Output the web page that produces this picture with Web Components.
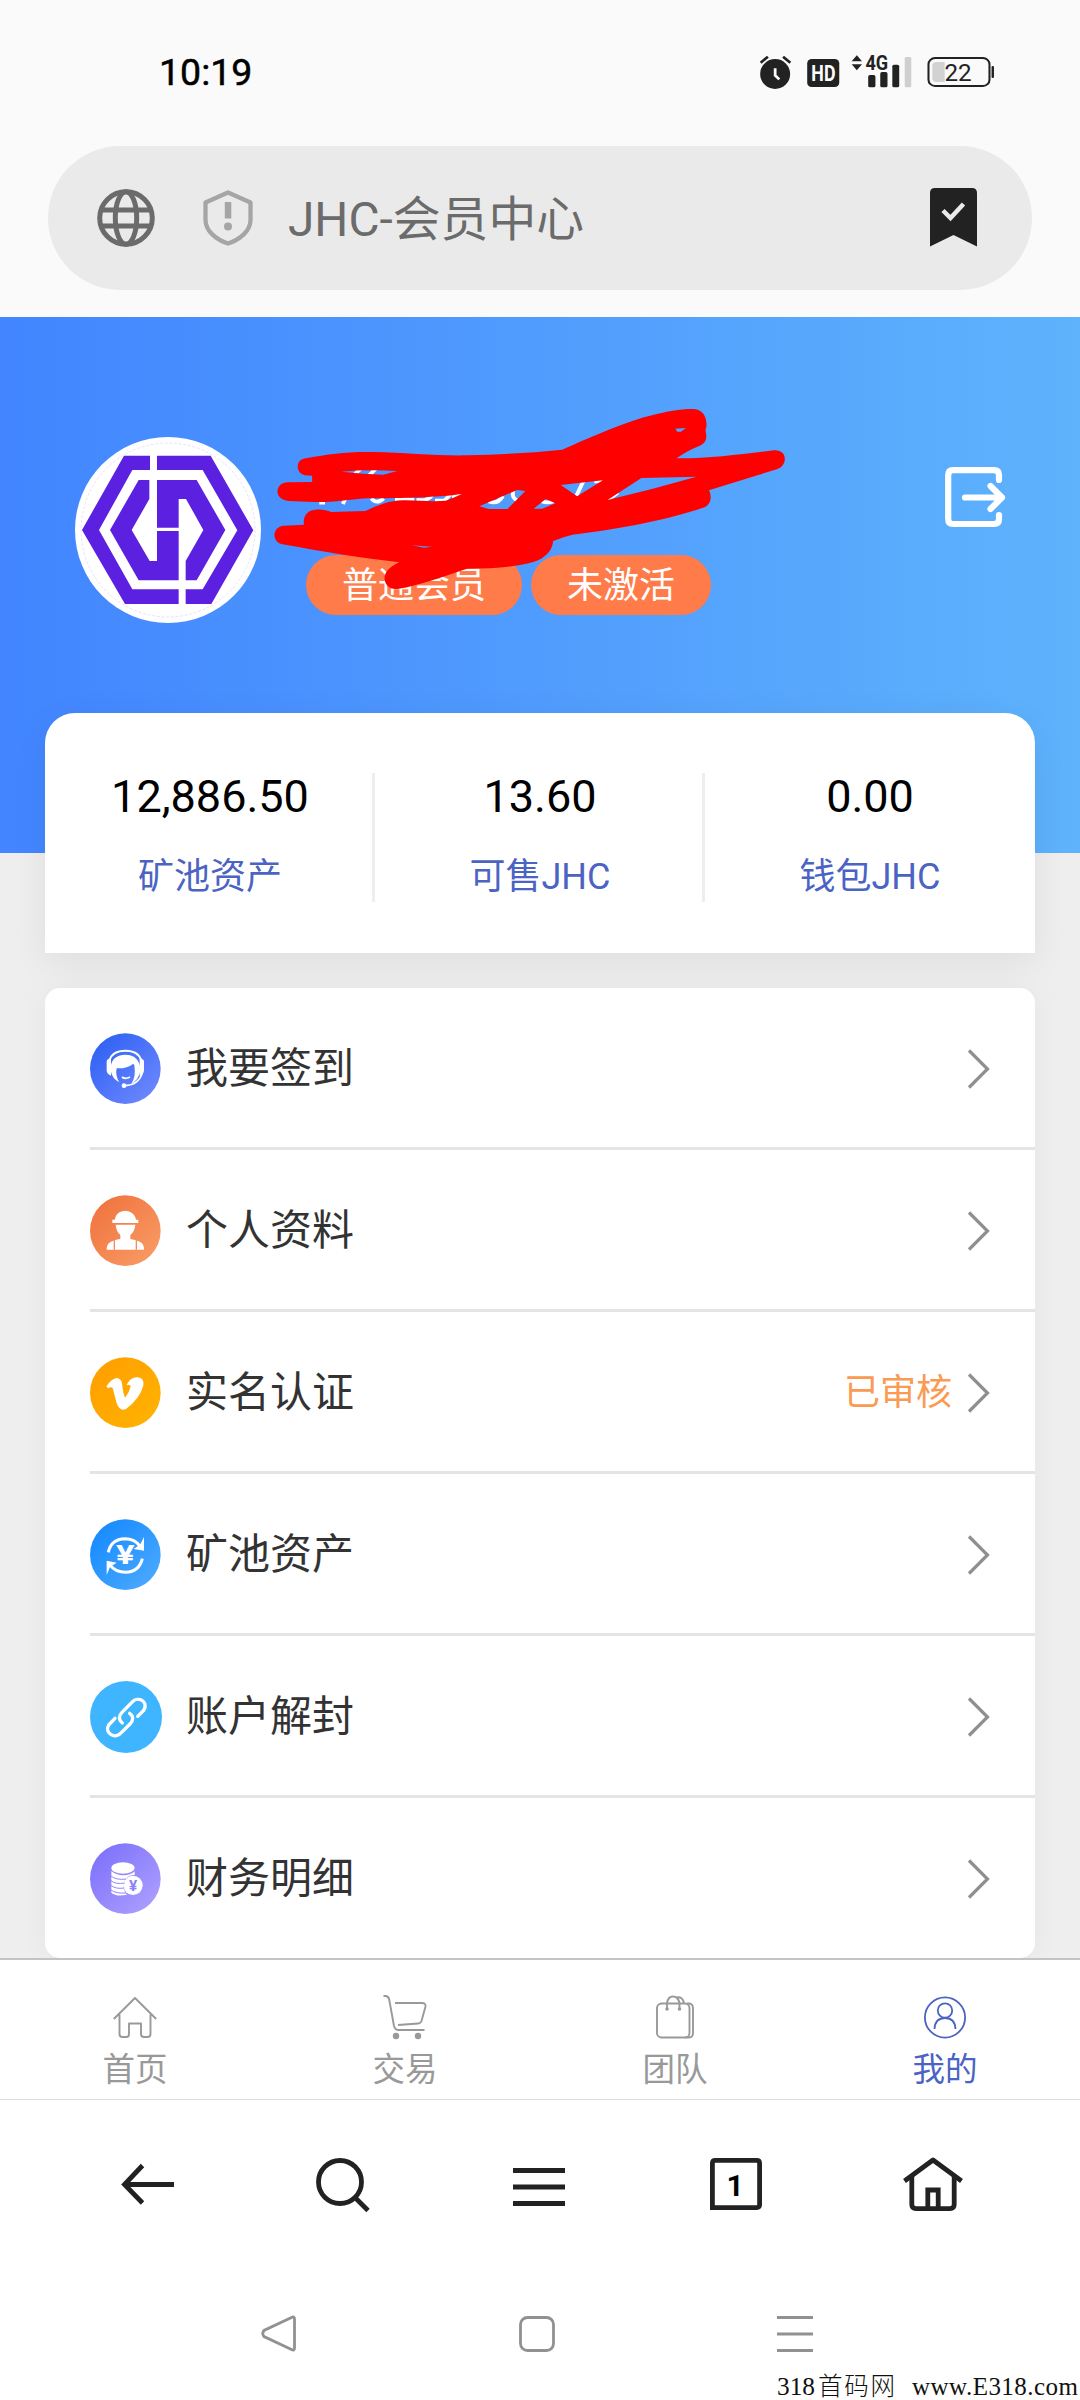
<!DOCTYPE html>
<html lang="zh-CN">
<head>
<meta charset="utf-8">
<title>JHC-会员中心</title>
<style>
html,body{margin:0;padding:0}
body{width:1080px;background:#eee;font-family:Roboto,"Noto Sans CJK SC",sans-serif;color:#333}
</style>
</head>
<body>
<member-page></member-page>
<script>
const def=(name,html,after)=>customElements.define(name,class extends HTMLElement{
  connectedCallback(){
    if(this.shadowRoot)return;
    const t=document.createElement('template');
    t.innerHTML=typeof html==='function'?html(this):html;
    this.attachShadow({mode:'open'}).append(t.content.cloneNode(true));
  }
});

const disc=(a,b,body)=>`<defs><linearGradient id="g" x1="0" y1="0" x2="1" y2="1"><stop offset=".1" stop-color="${a}"/><stop offset=".95" stop-color="${b}"/></linearGradient></defs><circle cx="106" cy="107" r="106" fill="url(#g)"/>${body}`;

/* name: [width, height, viewBox, markup] */
const ICONS={
status:[235,34,'638 165 682 102',`
 <g fill="#222"><ellipse cx="682" cy="222" rx="43.500" ry="45"/><path d="M640 188L661 170M726 188L705 170" stroke="#222" stroke-width="8"/><path d="M682 205V226L694 238" fill="none" stroke="#fafafa" stroke-width="8"/>
 <rect x="775" y="177" width="93" height="84" rx="13"/>
 <text x="822" y="242" font-family="Roboto" font-weight="700" font-size="66" fill="#fff" text-anchor="middle" textLength="70" lengthAdjust="spacingAndGlyphs">HD</text>
 <path d="M919 166L934 184H904ZM904 193H934L919 211Z"/>
 <text x="944" y="209" font-family="Roboto" font-weight="700" font-size="59" textLength="66" lengthAdjust="spacingAndGlyphs">4G</text>
 <rect x="952" y="225" width="21" height="37" rx="5"/><rect x="987" y="216" width="21" height="46" rx="5"/><rect x="1022" y="194" width="20" height="68" rx="5"/><rect x="1058" y="171" width="19" height="91" rx="4" fill="#cfcfcf"/></g>
 <rect x="1127" y="174" width="177" height="84" rx="19" fill="none" stroke="#222" stroke-width="6"/>
 <path d="M1174 186V246H1150Q1138 246 1138 234V198Q1138 186 1150 186Z" fill="#d2d2d2"/>
 <rect x="1310" y="198" width="7" height="36" rx="3" fill="#222"/>
 <text x="1213" y="243" font-family="Roboto" font-size="73" fill="#222" text-anchor="middle" textLength="79" lengthAdjust="spacingAndGlyphs">22</text>`],
globe:[58,58,'0 0 58 58',`<g fill="none" stroke="#6b6b6b" stroke-width="5"><circle cx="29" cy="29" r="26.300"/><ellipse cx="29" cy="29" rx="10.700" ry="26.300"/><path d="M5 21H53M5 37H53"/></g>`],
shield:[52,56,'0 0 52 56',`<path d="M26 2.500L48.500 12.500V30C48.500 41 38 49.500 26 53.500C14 49.500 3.500 41 3.500 30V12.500Z" fill="none" stroke="#a5a5a5" stroke-width="4.300" stroke-linejoin="round"/><rect x="22.800" y="12" width="6.500" height="16.500" fill="#a5a5a5"/><circle cx="26" cy="36.500" r="4" fill="#a5a5a5"/>`],
bookmark:[47,60,'0 0 47 60',`<path d="M0 5Q0 0 5 0H42Q47 0 47 5V58.500L23.500 47L0 58.500Z" fill="#222"/><path d="M13 22.500L20.500 30L33.500 16" fill="none" stroke="#eaeaea" stroke-width="4.500"/>`],
avatar:[186,186,'105 141 558 558',`<circle cx="384" cy="420" r="279" fill="#fff"/><circle cx="384" cy="420" r="261" fill="none" stroke="#c9b3f3" stroke-width="1.200" stroke-dasharray="9 5"/>
 <g fill="#5b20e0"><path d="M252 197H330V240H277L177 420L277 598H416V642H255L126 420Z"/><path d="M351 197H512L640 421L514 642H437V598H488L592 421L488 240H351Z"/><path d="M296 270H328V327L275 420L329 513H351V423H416V571H296L210 420Z"/><path d="M351 270H470L556 420L470 571H437V513L490 420L438 327H416V413H351Z"/></g>`],
logout:[60,60,'0 0 60 60',`<g fill="none" stroke="#fff" stroke-width="6.200" stroke-linecap="round" stroke-linejoin="round"><path d="M54 13V8Q54 3.200 49 3.200H8Q3.200 3.200 3.200 8V52Q3.200 57 8 57H49Q54 57 54 52V48"/><path d="M20 30.500H56M45.500 19L57 30.500L45.500 42"/></g>`],
scribble:[560,240,'0 0 1568 720',`
 <g fill="none" stroke="#fff" stroke-width="11"><path d="M262 256L284 234M304 258L326 234M166 338H182M232 342L242 318M312 325Q326 345 346 325M378 328H432M438 330H462Q480 322 486 310M490 332H515Q530 320 532 310M538 322L566 308"/><path d="M640 334Q665 345 680 318M708 298V316Q710 330 730 336M768 320Q795 345 822 334M884 322L908 268M936 274H960M970 334L1002 308"/></g>
 <path fill="#f00" fill-rule="evenodd" d="M133 204C190 192 250 184 320 186C400 188 500 198 580 196C680 194 760 188 846 179C930 140 1030 92 1100 75C1140 64 1180 56 1215 57C1240 60 1252 80 1250 110Q1246 118 1249 130C1252 150 1245 160 1230 168Q1200 180 1166 205C1260 206 1350 192 1440 181C1462 180 1472 196 1469 212C1466 228 1455 236 1440 240L1257 301C1264 315 1266 340 1245 352C1150 386 1020 416 875 434Q850 440 821 453C819 480 800 505 765 516C720 530 660 536 580 536C510 560 450 585 385 597C360 600 347 580 349 560C352 540 370 527 390 517C290 505 170 484 63 463C45 460 38 440 41 430C44 415 55 407 70 407L123 404C120 380 130 362 155 359C175 357 185 360 200 366L295 363C330 346 360 332 400 331C440 330 480 336 520 332Q540 325 565 312C500 322 400 325 300 325C240 330 200 338 150 336L80 333C60 331 48 318 49 303C51 288 60 277 78 277L146 276V257L125 256C110 250 104 240 106 225C108 212 118 206 133 204Z
 M228 245Q300 238 385 243L345 254Q290 252 228 245ZM614 349L720 300L743 303L693 357H640ZM766 356L800 327L827 340L790 356ZM842 285L960 271L888 319ZM973 330L1068 264L1222 260L1100 296ZM1163 116L1193 114L1178 125H1168ZM425 466L482 470L460 473Z"/>`],
chevron:[24,40,'0 0 24 40',`<path d="M2 1.500L20.500 20L2 38.500" fill="none" stroke="#8f8f8f" stroke-width="3.200"/>`],
service:[71,72,'0 0 213 216',disc('#2f62f3','#7089ff',`<path d="M59 81Q67 53 106 53Q145 53 153 81" fill="none" stroke="#fff" stroke-width="6"/><path d="M50 85Q52 77 63 76V128Q50 124 50 112ZM162 85Q160 77 149 76V128Q162 124 162 112Z" fill="#fff"/><path d="M62 112C60 80 79 65 106 65C134 65 152 82 151 113C147 136 132 149 125 150Q138 132 133 97L130 92Q112 107 80 106Q75 128 88 148Q66 138 62 112Z" fill="#fff"/><path d="M157 120Q146 155 106 158M96 132Q106 140 120 132" fill="none" stroke="#fff" stroke-width="5"/><circle cx="102" cy="158" r="7" fill="#fff"/>`)],
worker:[71,72,'0 0 213 216',disc('#f0743f','#f99c66',`<g fill="#fff"><path d="M67 74H74Q78 53 97 49Q106 45 115 49Q134 55 138 74H145V84H67ZM77 89H136Q134 110 121 120V132Q145 136 155 144Q162 150 162 164H50Q50 149 58 143Q70 135 91 132V120Q79 110 77 89Z"/></g><path d="M73 136V164M139 136V164" stroke="#f48a57" stroke-width="4"/>`)],
vee:[71,72,'0 0 213 216',disc('#ff9f00','#ffb300',`<path d="M49 88Q66 64 80 63Q93 64 96 79Q99 110 105 122Q119 105 122 88Q119 80 110 85Q120 60 143 61Q164 63 160 86Q149 125 108 156Q89 164 80 139Q75 119 68 93Q63 88 54 94Z" fill="#fff"/>`)],
pool:[71,72,'0 0 213 216',disc('#178aff','#4cabff',`<g fill="none" stroke="#fff" stroke-width="9"><path d="M55 100Q63 60 105 59Q134 59 151 82M157 119Q148 158 107 160Q76 160 59 137"/></g><path d="M162 54V95L131 90L151 76ZM50 168V125L80 131L60 144Z" fill="#fff"/><text x="106" y="136" text-anchor="middle" font-family="Roboto" font-weight="700" font-size="76" textLength="56" lengthAdjust="spacingAndGlyphs" fill="#fff">¥</text>`)],
link:[72,72,'0 0 216 216',`<circle cx="108" cy="108" r="108" fill="#40b5ff"/><g fill="none" stroke="#fff" stroke-width="10" stroke-linecap="round"><path d="M97 126C84 115 87 103 96 94L127 63C142 44 178 61 161 88L143 106"/><path d="M119 97C132 106 130 119 120 129L95 154C77 177 42 157 56 132L75 112"/></g>`],
coins:[71,72,'0 0 213 216',disc('#7e72fb','#aea0ff',`<g fill="#fff"><ellipse cx="99" cy="75" rx="35" ry="17"/><path d="M64 84Q80 99 110 96Q130 92 134 85V96Q102 97 101 130Q102 148 111 155Q79 162 64 149Z"/><circle cx="129" cy="127" r="29"/></g><path d="M63 99Q78 112 108 108M63 113Q77 125 104 120M63 127Q77 139 103 135M63 141Q77 152 108 150" fill="none" stroke="#9384fc" stroke-width="3"/><text x="129" y="144" text-anchor="middle" font-family="Roboto" font-weight="700" font-size="46" fill="#8d80fb">¥</text>`)],
tabHome:[44,44,'0 0 44 44',`<path d="M.8 24L22 3L43.200 24M6.500 19.500V39Q6.500 42 9.500 42H13.500Q16 42 16 39V28.500H28V39Q28 42 31 42H34.500Q37.500 42 37.500 39V19.500" fill="none" stroke="#999" stroke-width="1.900" stroke-linejoin="round"/>`],
tabCart:[44,45,'0 0 44 45',`<g fill="none" stroke="#999" stroke-width="1.900"><path d="M.5 1H3Q5.500 1.500 6.200 4.500L11 31Q12 35 15.500 35H41.500M12 8H39Q43 8 42.500 11.500L38.500 26Q37.500 28.500 35 28.500L15 30"/></g><circle cx="13" cy="41" r="3.200" fill="#999"/><circle cx="35" cy="41" r="3.200" fill="#999"/>`],
tabBag:[38,44,'0 0 38 44',`<g fill="none" stroke="#999" stroke-width="1.900"><rect x="1" y="8.500" width="32.500" height="34" rx="4.500"/><path d="M31 8.500H33Q37 9 37 13V38Q37 42.500 33 42.500H29M11 14V8Q12 1.500 17 1.500Q22 1.500 23.500 8V14M20 2.500Q27 1 28 8.500"/></g><circle cx="11" cy="14" r="1.800" fill="#999"/><circle cx="23.500" cy="14" r="1.800" fill="#999"/>`],
tabUser:[42,43,'0 0 42 43',`<g fill="none" stroke="#4b63c3" stroke-width="1.800"><circle cx="21" cy="21.500" r="20.100"/><circle cx="21" cy="14.500" r="7.200"/><path d="M10.500 33Q11 22 21 22Q31 22 31.500 33"/></g>`],
back:[54,42,'0 0 54 42',`<path d="M53 21.500H4M21.500 2.500L3.500 21.500L21.500 40" fill="none" stroke="#222" stroke-width="4.800"/>`],
search:[54,56,'0 0 54 56',`<circle cx="24" cy="25" r="21.500" fill="none" stroke="#222" stroke-width="4.800"/><path d="M38.500 40L52 53.500" stroke="#222" stroke-width="4.800"/>`],
menu:[52,40,'0 0 52 40',`<path d="M0 3.500H52M0 20H52M0 36.500H52" stroke="#222" stroke-width="4.800"/>`],
tabs:[52,52,'0 0 52 52',`<path d="M2.400 49.600V5.400Q2.400 2.400 5.400 2.400H46.600Q49.600 2.400 49.600 5.400V46.600Q49.600 49.600 46.600 49.600Z" fill="none" stroke="#222" stroke-width="4.800"/><text x="25" y="37.500" text-anchor="middle" font-family="Roboto" font-weight="700" font-size="30" fill="#000">1</text>`],
house:[60,56,'0 0 60 56',`<g fill="none" stroke="#222" stroke-width="4.800"><path d="M1.500 24L30 3L58.500 24" stroke-linejoin="round"/><path d="M8.800 20V47.500Q8.800 51.600 13 51.600H47Q51.200 51.600 51.200 47.500V20M24.800 51V33H35.200V51"/></g>`],
sysBack:[36,37,'0 0 36 37',`<path d="M30.500 2.500Q33.500 .8 33.500 4V33Q33.500 36 30.500 34.500L3 21.500Q.5 18.500 3 15.500Z" fill="none" stroke="#919191" stroke-width="2.800"/>`],
sysHome:[36,36,'0 0 36 36',`<rect x="1.500" y="1.500" width="33" height="33" rx="7" fill="none" stroke="#919191" stroke-width="2.800"/>`],
sysMenu:[36,36,'0 0 36 36',`<path d="M0 1.500H36M0 18H36M0 34.500H36" stroke="#919191" stroke-width="3"/>`],
watermark:[303,30,'0 0 303 30',`<g font-size="25" fill="#111" font-family="'Liberation Serif','Noto Sans CJK SC',serif"><text x="0" y="24.500" textLength="38" lengthAdjust="spacingAndGlyphs">318</text><text x="41" y="24.500" font-size="24.500" font-weight="300" textLength="77" lengthAdjust="spacing">首码网</text><text x="135" y="24.500" textLength="166" lengthAdjust="spacing">www.E318.com</text></g>`]
};

def('ui-icon',el=>{
  const [w,h,vb,body]=ICONS[el.getAttribute('name')];
  return `<style>:host{display:block;flex:none;width:${w}px;height:${h}px}svg{display:block;overflow:visible}</style><svg width="${w}" height="${h}" viewBox="${vb}" preserveAspectRatio="none">${body}</svg>`;
});

def('status-bar',`<style>:host{display:flex;height:144px;align-items:center;justify-content:space-between;padding:0 85px 0 159px;background:#fafafa;box-sizing:border-box}
span{font:400 37.500px/1 Roboto;color:#000;-webkit-text-stroke:.5px #000;padding-top:2px}</style><span>10:19</span><ui-icon name="status"></ui-icon>`);

def('address-bar',`<style>:host{display:block;background:#fafafa;padding:2px 48px 27px}
div{display:flex;align-items:center;height:144px;border-radius:72px;background:#eaeaea;box-sizing:border-box;padding:0 55px 0 49px}
.s{margin:0 34px 0 47px}span{flex:1;font-size:47.800px;line-height:60px;color:#6b6b6b;padding-top:3px}</style>
<div><ui-icon name="globe"></ui-icon><ui-icon class="s" name="shield"></ui-icon><span>JHC-会员中心</span><ui-icon name="bookmark"></ui-icon></div>`);

def('tag-pill',`<style>:host{display:block;height:60px;box-sizing:border-box;padding:1px 36px 0;border-radius:30px;background:#ff7b49;color:#fff;font-size:36px;line-height:60px}</style><slot></slot>`);

def('profile-banner',`<style>:host{display:flex;position:relative;height:536px;box-sizing:border-box;padding:120px 75px 0;align-items:flex-start;background:linear-gradient(90deg,#4285ff,#5eb3fc)}
.tags{display:flex;gap:9px;margin:118px 0 0 45px}.out{margin:30px 0 0 auto}.ink{position:absolute;left:260px;top:73px}</style>
<ui-icon name="avatar"></ui-icon><div class="tags"><tag-pill>普通会员</tag-pill><tag-pill>未激活</tag-pill></div><ui-icon class="out" name="logout"></ui-icon><ui-icon class="ink" name="scribble"></ui-icon>`);

def('asset-cell',el=>`<style>:host{display:flex;flex:1;flex-direction:column;align-items:center;height:129px;box-sizing:border-box;border-right:3px solid #eee;padding-left:3px}
:host(:last-child){border-color:transparent}
b{font-weight:400;font-size:45px;line-height:50px;color:#000;margin-top:-1px}span{font-size:36px;line-height:48px;color:#4b63c3;margin-top:31px}</style><b>${el.getAttribute('value')}</b><span><slot></slot></span>`);

def('asset-card',`<style>:host{display:flex;position:relative;height:240px;margin:-140px 45px 0;padding-top:60px;box-sizing:border-box;background:#fff;border-radius:30px 30px 0 0;box-shadow:0 9px 36px rgba(0,0,0,.07)}</style><slot></slot>`);

def('menu-row',el=>`<style>:host{display:flex;align-items:center;height:162px;box-sizing:border-box;border-bottom:3px solid #e4e4e4;padding-right:44px}
:host(:last-child){border:0;height:159px}
.i{width:96px;padding-top:2px}span{flex:1;font-size:42px;line-height:60px;color:#333;padding-top:2px}em{font-style:normal;font-size:36px;color:#fb9a52;margin-right:15px;line-height:50px;padding-top:3px}.c{padding-top:2px}</style>
<div class="i"><ui-icon name="${el.getAttribute('icon')}"></ui-icon></div><span><slot></slot></span>${el.hasAttribute('note')?`<em>${el.getAttribute('note')}</em>`:''}<ui-icon class="c" name="chevron"></ui-icon>`);

def('menu-card',`<style>:host{display:block;position:relative;height:970px;margin:35px 45px 0;padding-left:45px;box-sizing:border-box;background:#fff;border-radius:15px;box-shadow:0 0 30px rgba(0,0,0,.04)}</style><slot></slot>`);

def('tab-item',el=>`<style>:host{display:flex;flex:1;flex-direction:column;align-items:center;color:#999;font-size:32.500px;line-height:44px}:host([active]){color:#4b63c3}
.i{height:46px;display:flex;align-items:center;margin:34px 0 8px}</style><div class="i"><ui-icon name="${el.getAttribute('icon')}"></ui-icon></div><slot></slot>`);

def('tab-strip',`<style>:host{display:flex;position:relative;height:142px;box-sizing:border-box;background:#fff;border-top:2px solid #c4c4c4;border-bottom:1px solid #ddd}</style><slot></slot>`);

def('browser-bar',`<style>:host{display:flex;align-items:flex-start;height:170px;box-sizing:border-box;padding:0 0 0 121px;background:#fff}
.a{margin-top:63px}.b{margin:57px 0 0 141px}.c{margin:67px 0 0 143px}.d{margin:58px 0 0 145px}.e{margin:57px 0 0 141px}</style>
<ui-icon class="a" name="back"></ui-icon><ui-icon class="b" name="search"></ui-icon><ui-icon class="c" name="menu"></ui-icon><ui-icon class="d" name="tabs"></ui-icon><ui-icon class="e" name="house"></ui-icon>`);

def('system-nav',`<style>:host{display:flex;flex-direction:column;align-items:flex-end;height:130px;background:#fff}
div{display:flex;width:1080px;box-sizing:border-box;justify-content:space-between;align-items:center;padding:45px 267px 18px 261px;height:100px}</style>
<div><ui-icon name="sysBack"></ui-icon><ui-icon name="sysHome"></ui-icon><ui-icon name="sysMenu"></ui-icon></div><ui-icon name="watermark"></ui-icon>`);

def('member-page',`<style>:host{display:flex;flex-direction:column;width:1080px;height:2400px;overflow:hidden;background:#eee}</style>
<status-bar></status-bar><address-bar></address-bar><profile-banner></profile-banner>
<asset-card><asset-cell value="12,886.50">矿池资产</asset-cell><asset-cell value="13.60">可售JHC</asset-cell><asset-cell value="0.00">钱包JHC</asset-cell></asset-card>
<menu-card><menu-row icon="service">我要签到</menu-row><menu-row icon="worker">个人资料</menu-row><menu-row icon="vee" note="已审核">实名认证</menu-row><menu-row icon="pool">矿池资产</menu-row><menu-row icon="link">账户解封</menu-row><menu-row icon="coins">财务明细</menu-row></menu-card>
<tab-strip><tab-item icon="tabHome">首页</tab-item><tab-item icon="tabCart">交易</tab-item><tab-item icon="tabBag">团队</tab-item><tab-item icon="tabUser" active>我的</tab-item></tab-strip>
<browser-bar></browser-bar><system-nav></system-nav>`);
</script>
</body>
</html>
